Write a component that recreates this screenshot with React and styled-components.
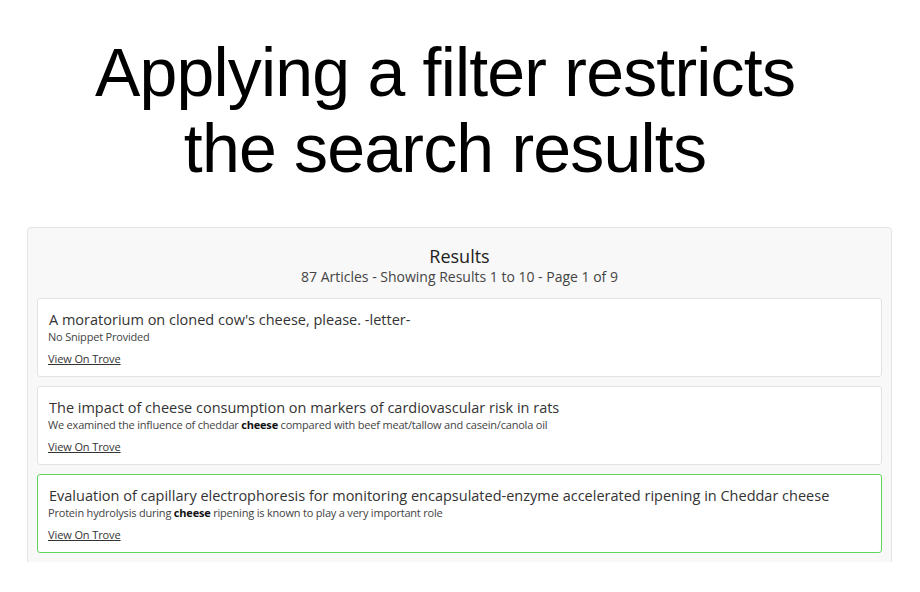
import styled, { createGlobalStyle } from "styled-components";

const GlobalStyle = createGlobalStyle`
  html, body {
    margin: 0;
    padding: 0;
    background: #ffffff;
  }
`;

const Page = styled.div`
  height: 562px;
  overflow: hidden;
  background: #ffffff;
`;

const Heading = styled.h1`
  margin: 0;
  padding: 34px 30px 0 0;
  font-family: "Liberation Sans", Helvetica, Arial, sans-serif;
  font-weight: 400;
  font-size: 68px;
  line-height: 76px;
  letter-spacing: -0.8px;
  text-align: center;
  color: #000;
`;

const Panel = styled.section`
  margin: 41px 28px 0 27px;
  padding: 17px 9px 40px;
  background: #f8f8f8;
  border: 1px solid #e4e4e4;
  border-radius: 4px;
  font-family: "Open Sans", "Noto Sans", sans-serif;
  font-size: 14px;
`;

const PanelHeader = styled.header`
  text-align: center;
  margin-bottom: 11px;
`;

const PanelTitle = styled.div`
  font-size: 18px;
  line-height: 22px;
  color: #222;
`;

const PanelMeta = styled.div`
  font-size: 14px;
  line-height: 20px;
  color: #444;
`;

const List = styled.div`
  display: flex;
  flex-direction: column;
  gap: 9px;
`;

const Card = styled.article`
  background: #fff;
  border: 1px solid ${(p) => (p.$active ? "#5ed65a" : "#e2e2e2")};
  border-radius: 3px;
  padding: 12px 10px 10px;
  min-height: 55px;
`;

const CardTitle = styled.div`
  font-size: 14.5px;
  line-height: 18px;
  color: #333;
  padding-left: 1px;
`;

const Snippet = styled.div`
  font-size: 11px;
  line-height: 15px;
  color: #444;
  letter-spacing: -0.2px;

  b {
    color: #111;
    font-weight: 700;
  }
`;

const TroveLink = styled.a`
  display: block;
  width: fit-content;
  margin-top: 7px;
  font-size: 11px;
  line-height: 15px;
  color: #333;
  text-decoration: underline;
  letter-spacing: -0.1px;
`;

const results = [
  {
    title: "A moratorium on cloned cow's cheese, please. -letter-",
    snippet: <>No Snippet Provided</>,
  },
  {
    title:
      "The impact of cheese consumption on markers of cardiovascular risk in rats",
    snippet: (
      <>
        We examined the influence of cheddar <b>cheese</b> compared with beef
        meat/tallow and casein/canola oil
      </>
    ),
  },
  {
    title:
      "Evaluation of capillary electrophoresis for monitoring encapsulated-enzyme accelerated ripening in Cheddar cheese",
    snippet: (
      <>
        Protein hydrolysis during <b>cheese</b> ripening is known to play a very
        important role
      </>
    ),
    active: true,
  },
];

const App = () => {
  return (
    <Page>
      <GlobalStyle />
      <Heading>
        Applying a filter restricts
        <br />
        the search results
      </Heading>
      <Panel>
        <PanelHeader>
          <PanelTitle>Results</PanelTitle>
          <PanelMeta>87 Articles - Showing Results 1 to 10 - Page 1 of 9</PanelMeta>
        </PanelHeader>
        <List>
          {results.map((r, i) => (
            <Card key={i} $active={r.active}>
              <CardTitle>{r.title}</CardTitle>
              <Snippet>{r.snippet}</Snippet>
              <TroveLink href="#">View On Trove</TroveLink>
            </Card>
          ))}
          {/* next result starts just below the fold */}
          <Card />
        </List>
      </Panel>
    </Page>
  );
};

export default App;
